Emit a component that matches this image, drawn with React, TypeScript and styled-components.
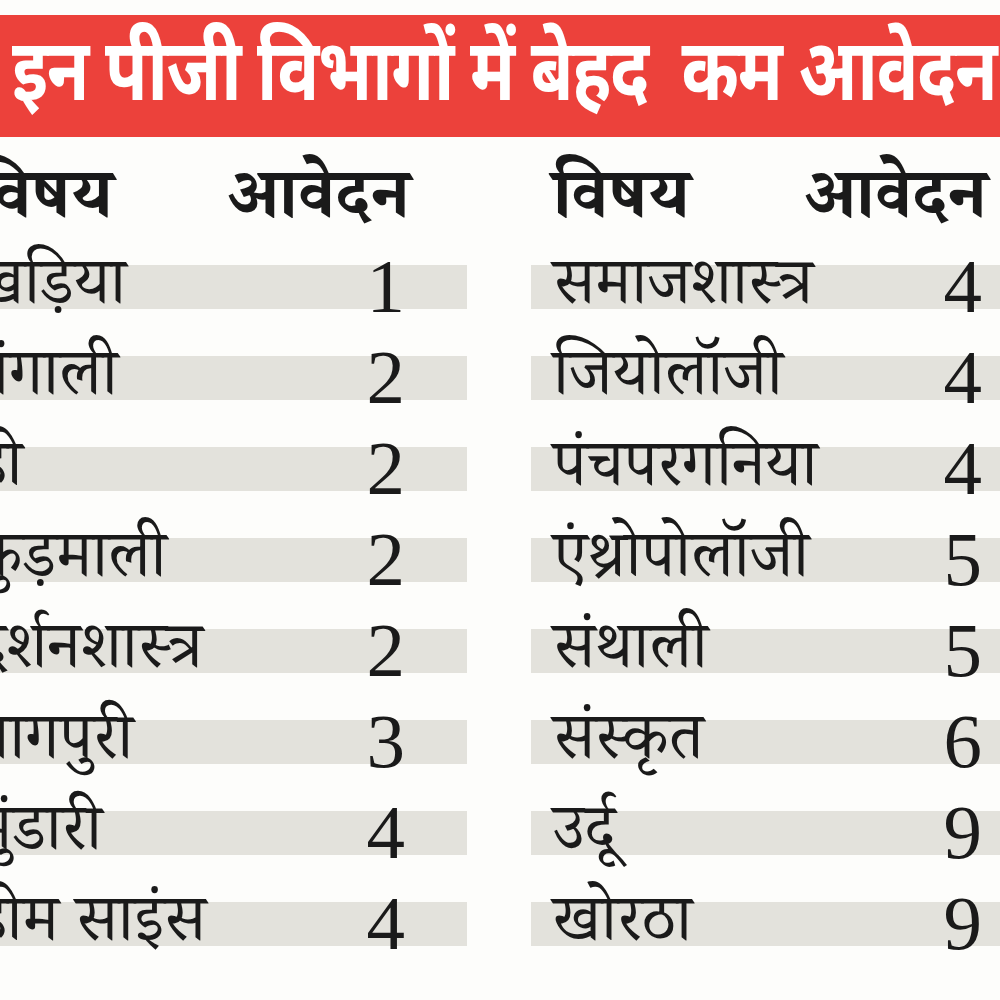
import React from "react";
import styled, { createGlobalStyle } from "styled-components";

const Global = createGlobalStyle`
  html, body { margin: 0; padding: 0; background: #fdfdfb; }
  #root { width: 1000px; height: 1000px; }
`;

const Page = styled.div`
  width: 1000px;
  height: 1000px;
  overflow: hidden;
  background: #fdfdfb;
  padding-top: 15px;
  box-sizing: border-box;
`;

const Banner = styled.div`
  height: 122px;
  background: #ec413b;
  display: flex;
  align-items: center;
  padding-left: 12px;
  box-sizing: border-box;
  overflow: hidden;
`;

const Title = styled.h1`
  margin: 6px 0 0;
  color: #fff;
  font-family: "Noto Sans Devanagari", "Lohit Devanagari", "Noto Sans", sans-serif;
  font-weight: 700;
  font-size: 86px;
  line-height: 1;
  white-space: pre;
  letter-spacing: -1.5px;
  transform: scaleX(0.805);
  transform-origin: left center;
`;

const Tables = styled.div`
  display: flex;
  gap: 64px;
  margin-left: -46px;
`;

const Column = styled.div`
  width: 513px;
  flex: none;
  display: flex;
  flex-direction: column;
`;

const HeadRow = styled.div`
  height: 128px;
  box-sizing: border-box;
  padding: 12px 57px 0 22px;
  display: flex;
  align-items: center;
  justify-content: space-between;
`;

const HeadCell = styled.span`
  font-family: "Noto Serif Devanagari", "Noto Sans Devanagari", "Lohit Devanagari", sans-serif;
  font-weight: 700;
  font-size: 70px;
  color: #1a1a1a;
  line-height: 1;
  letter-spacing: 0.5px;
`;

const Row = styled.div`
  height: 44px;
  background: #e3e2dc;
  margin-bottom: 47px;
  display: flex;
  align-items: flex-end;
  justify-content: space-between;
  padding: 0 62px 0 22px;
`;

const Subject = styled.span`
  font-family: "Noto Serif Devanagari", "Noto Sans Devanagari", "Lohit Devanagari", serif;
  font-size: 65px;
  color: #1a1a1a;
  line-height: 1;
  margin-bottom: -17px;
  white-space: nowrap;
`;

const Count = styled.span`
  font-family: "Liberation Serif", "DejaVu Serif", serif;
  font-size: 77px;
  color: #1a1a1a;
  line-height: 1;
  margin-bottom: -16px;
`;

type Item = [string, number];

const left: Item[] = [
  ["खड़िया", 1],
  ["बंगाली", 2],
  ["हो", 2],
  ["कुड़माली", 2],
  ["दर्शनशास्त्र", 2],
  ["नागपुरी", 3],
  ["मुंडारी", 4],
  ["होम साइंस", 4],
];

const right: Item[] = [
  ["समाजशास्त्र", 4],
  ["जियोलॉजी", 4],
  ["पंचपरगनिया", 4],
  ["एंथ्रोपोलॉजी", 5],
  ["संथाली", 5],
  ["संस्कृत", 6],
  ["उर्दू", 9],
  ["खोरठा", 9],
];

const Table: React.FC<{ items: Item[] }> = ({ items }) => (
  <Column>
    <HeadRow>
      <HeadCell>विषय</HeadCell>
      <HeadCell>आवेदन</HeadCell>
    </HeadRow>
    {items.map(([name, n]) => (
      <Row key={name}>
        <Subject>{name}</Subject>
        <Count>{n}</Count>
      </Row>
    ))}
  </Column>
);

export default function App() {
  return (
    <>
      <Global />
      <Page>
        <Banner>
          <Title>{"इन पीजी विभागों में बेहद  कम आवेदन"}</Title>
        </Banner>
        <Tables>
          <Table items={left} />
          <Table items={right} />
        </Tables>
      </Page>
    </>
  );
}
